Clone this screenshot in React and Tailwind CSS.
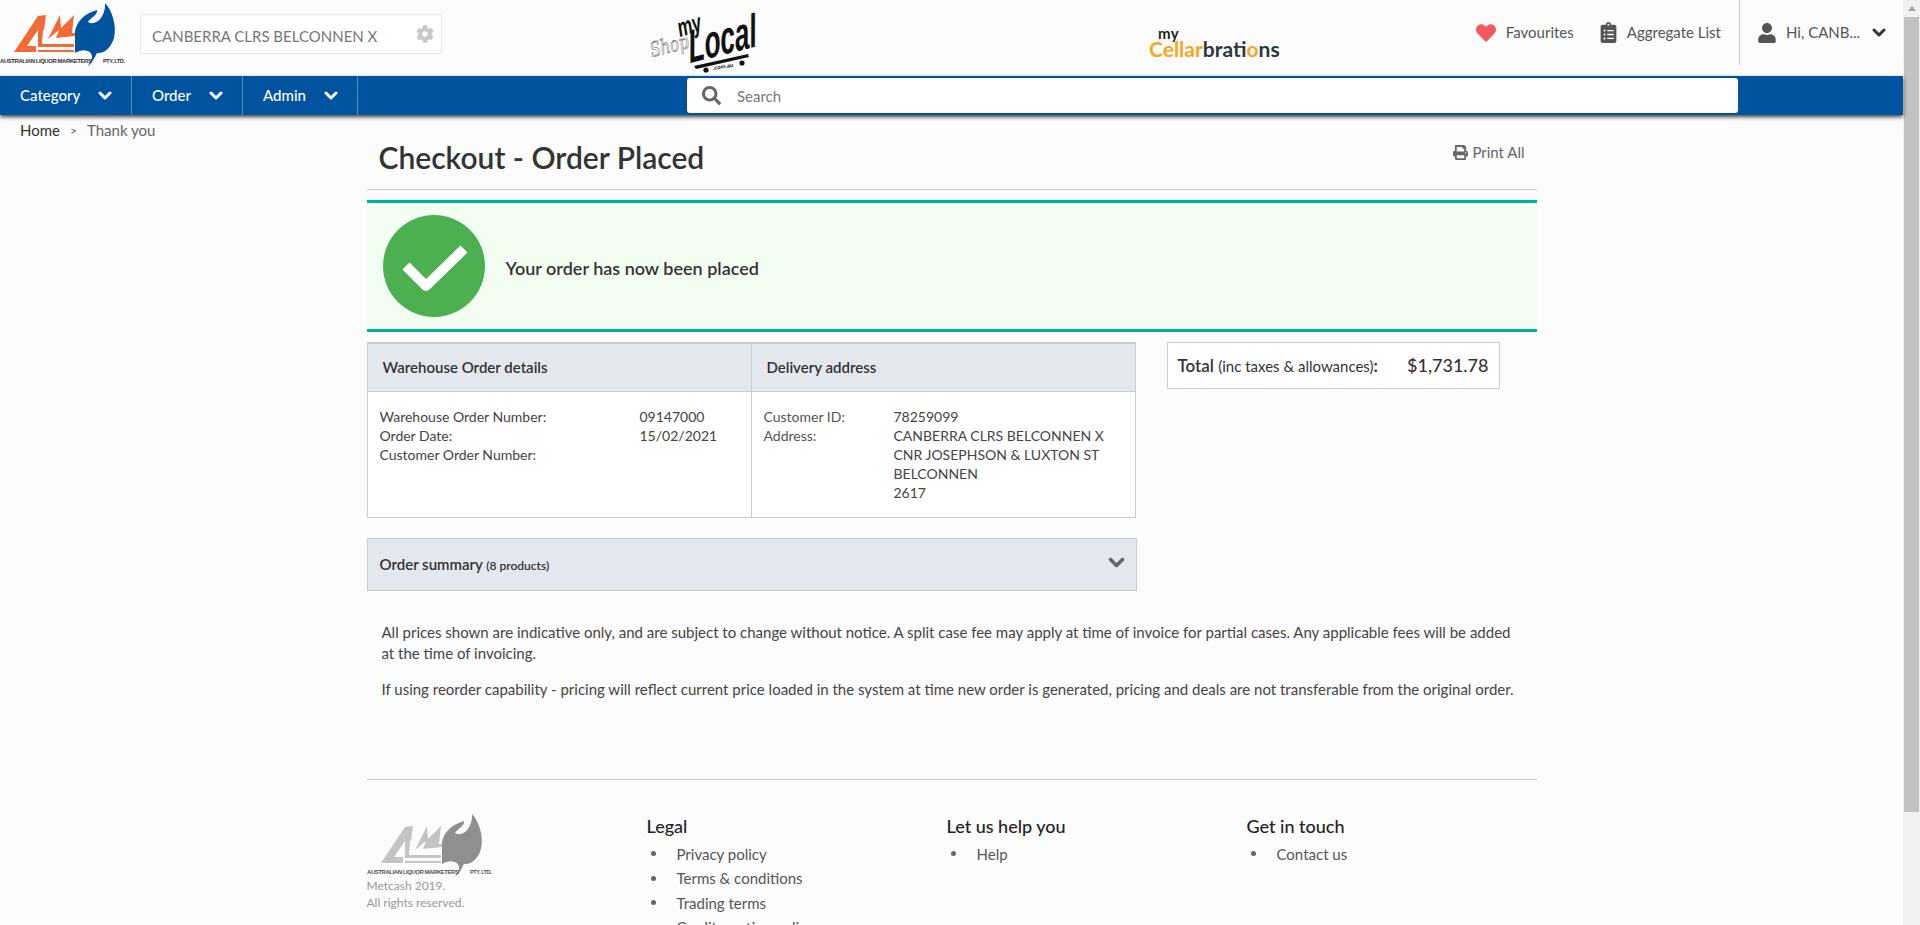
import React from "react";
import { FaHeart, FaClipboardList, FaUser, FaSearch, FaCog, FaPrint } from "react-icons/fa";

function Chevron({ className }) {
  return (
    <svg viewBox="0 0 14 10" className={className}>
      <path d="M2 2 L7 7 L12 2" fill="none" stroke="currentColor" strokeWidth="3" strokeLinecap="round" strokeLinejoin="round" />
    </svg>
  );
}

function AlmLogo({ gray, className }) {
  const o = gray ? "#c4c4c4" : "#f26a36";
  const b = gray ? "#8f8f8f" : "#00539f";
  const t = gray ? "#555" : "#333";
  return (
    <svg viewBox="0 0 130 72" className={className}>
      <path fill={b} d="M75 31 C77 22 83 14 97 10 C98 15 90 18 88 22 C96 27 106 16 105 3 C112 10 117 26 114 38 C111 48 104 54 97 53 C95 57 92 63 88 66 L92 58 C93 52 85 47 75 53 Z" />
      <path fill={o} d="M14 52 L38 16 L46 15 L44 30 L38 30 L27 46 L36 46 L36 52 Z" />
      <path fill={o} d="M38 30 L43 30 L42 44 L74 44 L74 47 L38 47 Z" />
      <path fill={o} d="M38 50 L74 50 L74 52 L38 52 Z" />
      <path fill={o} d="M48 39 L60 15 L61 28 L74 15 L72 33 L75 33 L75 36 L56 38 L59 30 Z" />
      <text x="0" y="63" fontFamily="'Liberation Sans', sans-serif" fontWeight="700" fontSize="6" fill={t} textLength="92">AUSTRALIAN LIQUOR MARKETERS</text>
      <text x="103" y="63" fontFamily="'Liberation Sans', sans-serif" fontWeight="700" fontSize="5.5" fill={t} textLength="22">PTY. LTD.</text>
    </svg>
  );
}

function ShopLocal() {
  return (
    <svg viewBox="640 10 130 66" className="w-[130px] h-[66px] overflow-visible">
      <text x="652" y="57" fontFamily="'DejaVu Serif', serif" fontStyle="italic" fontSize="20" fill="#fff" stroke="#666" strokeWidth="0.6" textLength="39" lengthAdjust="spacingAndGlyphs" transform="rotate(-14 652 57)">Shop</text>
      <text x="680" y="37" fontFamily="'Liberation Sans', sans-serif" fontWeight="700" fontStyle="italic" fontSize="26" fill="#111" textLength="24" lengthAdjust="spacingAndGlyphs" transform="rotate(-16 680 37)">my</text>
      <text x="0" y="0" fontFamily="'Liberation Sans', sans-serif" fontWeight="700" fontStyle="italic" fontSize="46" fill="#111" textLength="70" lengthAdjust="spacingAndGlyphs" transform="translate(690 63) rotate(-14) skewX(-8)">Local</text>
      <path d="M694 66 L748 54 L749 57 L696 69 Z" fill="#111" />
      <circle cx="706" cy="70" r="2.6" fill="#111" />
      <circle cx="742" cy="63" r="2.6" fill="#111" />
      <text x="713" y="70" fontFamily="'Liberation Sans', sans-serif" fontStyle="italic" fontWeight="700" fontSize="5.5" fill="#111" transform="rotate(-9 713 70)">.com.au</text>
    </svg>
  );
}

function Cellar() {
  return (
    <div className="flex flex-col items-start font-bold leading-none whitespace-nowrap">
      <span className="ml-[9px] text-[15px] text-[#222] leading-[13px] tracking-[0.5px]">my</span>
      <span className="text-[21px] leading-[17px] text-[#2f3640]">
        <span className="text-[#f6a623]">Cellar</span>brati<span className="text-[#f6a623]">o</span>ns
      </span>
    </div>
  );
}

function NavItem({ label, w }) {
  return (
    <div className={`flex items-center h-full border-r border-[#5a8cc0] pl-5 ${w}`}>
      <span className="text-[15px] text-white font-medium">{label}</span>
      <Chevron className="text-white w-[14px] h-[10px] ml-auto mr-[19px]" />
    </div>
  );
}

function FooterCol({ title, items, w }) {
  return (
    <div className={w}>
      <h4 className="text-[18px] leading-[24px] font-medium text-[#222]">{title}</h4>
      <ul className="mt-[4px] text-[15px] leading-[24.5px] text-[#555]">
        {items.map((i) => (
          <li key={i} className="flex items-center whitespace-nowrap">
            <span className="ml-[4px] w-[5px] h-[5px] rounded-full bg-[#666] shrink-0" />
            <span className="ml-[21px]">{i}</span>
          </li>
        ))}
      </ul>
    </div>
  );
}

export default function App() {
  return (
    <div className="h-[925px] w-[1920px] overflow-hidden flex bg-[#fcfcfc] font-['Lato','Liberation_Sans',sans-serif] text-[#333]">
      <div className="w-[1903px] shrink-0 flex flex-col">
        <header className="h-[76px] flex items-start shrink-0">
          <AlmLogo className="w-[130px] h-[72px] shrink-0" />
          <div className="ml-[10px] mt-[14px] w-[302px] h-[40px] bg-white border border-[#e6e6e6] rounded-[2px] flex items-center pl-[11px] pr-[7px]">
            <span className="text-[15px] text-[#777] flex-1 whitespace-nowrap pt-[4px]">CANBERRA CLRS BELCONNEN X</span>
            <FaCog className="w-[18px] h-[18px] text-[#c8c8c8]" />
          </div>
          <div className="ml-[198px] mt-[10px] w-[130px] shrink-0"><ShopLocal /></div>
          <div className="ml-[379px] mt-[27px] shrink-0"><Cellar /></div>
          <div className="ml-auto flex items-center h-[65px]">
            <FaHeart className="w-[20px] h-[20px] text-[#f05a5f]" />
            <span className="ml-[10px] text-[15px] text-[#555]">Favourites</span>
            <FaClipboardList className="ml-[26px] w-[17px] h-[21px] text-[#555]" />
            <span className="ml-[10px] text-[15px] text-[#555]">Aggregate List</span>
            <div className="ml-[18px] h-[65px] border-l border-[#ccc] flex items-center pl-[18px] w-[164px] pr-[17px]">
              <FaUser className="w-[18px] h-[20px] text-[#555]" />
              <span className="ml-[10px] text-[15px] text-[#555]">Hi, CANB...</span>
              <Chevron className="ml-auto w-[14px] h-[10px] text-[#333]" />
            </div>
          </div>
        </header>
        <nav className="h-[39px] bg-[#00539f] shadow-[0_2px_4px_rgba(0,0,0,0.75)] flex items-center shrink-0 relative">
          <NavItem label="Category" w="w-[132px]" />
          <NavItem label="Order" w="w-[111px]" />
          <NavItem label="Admin" w="w-[115px]" />
          <div className="ml-[329px] w-[1051px] h-[35px] bg-white rounded-[3px] flex items-center pl-[15px]">
            <FaSearch className="w-[19px] h-[19px] text-[#666]" />
            <span className="ml-[16px] pt-[1px] text-[15px] text-[#777]">Search</span>
          </div>
        </nav>
        <div className="h-[30px] pl-[20px] pt-[1px] flex items-center text-[15px] shrink-0">
          <span className="text-[#333]">Home</span>
          <span className="mx-[10px] text-[#666] text-[12px]">&gt;</span>
          <span className="text-[#666]">Thank you</span>
        </div>
        <main className="w-[1170px] mx-auto">
          <div className="h-[44px] border-b border-[#ccc] flex items-start justify-between box-content">
            <h1 className="pl-[12px] text-[30px] leading-[40px] font-semibold text-[#333] mt-[-8px]">Checkout - Order Placed</h1>
            <div className="flex items-center mr-[12px] mt-[-3px] h-[20px] text-[15px] text-[#666]">
              <FaPrint className="w-[15px] h-[15px] mr-[4px]" />Print All
            </div>
          </div>
          <div className="mt-[10px] h-[132px] border-y-[3px] border-[#00b294] bg-[#f3fef3] flex items-center pl-[16px]">
            <div className="w-[102px] h-[102px] rounded-full bg-[#4caf50] flex items-center justify-center">
              <svg viewBox="-40 -30 80 60" className="w-[80px] h-[60px]">
                <path d="M-28 0 L-8 20 L30 -17" fill="none" stroke="#fff" strokeWidth="10" strokeLinejoin="round" />
              </svg>
            </div>
            <span className="ml-[21px] mt-[4px] text-[18px] font-semibold text-[#333]">Your order has now been placed</span>
          </div>
          <div className="flex mt-[10px] items-start">
            <div className="w-[769px] shrink-0">
              <div className="border border-[#ccc] border-t-2 flex flex-col h-[176px]">
                <div className="flex h-[48px] bg-[#e3e8ef] border-b border-[#ccc] shrink-0">
                  <div className="w-[384px] border-r border-[#ccc] pl-[15px] flex items-center text-[15px] font-semibold text-[#333]">Warehouse Order details</div>
                  <div className="flex-1 pl-[15px] flex items-center text-[15px] font-semibold text-[#333]">Delivery address</div>
                </div>
                <div className="flex flex-1 bg-white text-[14px] leading-[19px] text-[#444]">
                  <div className="w-[384px] border-r border-[#ccc] pl-[12px] pt-[15px] flex">
                    <div className="w-[260px]">
                      <div>Warehouse Order Number:</div>
                      <div>Order Date:</div>
                      <div>Customer Order Number:</div>
                    </div>
                    <div>
                      <div>09147000</div>
                      <div>15/02/2021</div>
                    </div>
                  </div>
                  <div className="flex-1 pl-[12px] pt-[15px] flex">
                    <div className="w-[130px] text-[#555]">
                      <div>Customer ID:</div>
                      <div>Address:</div>
                    </div>
                    <div>
                      <div>78259099</div>
                      <div>CANBERRA CLRS BELCONNEN X</div>
                      <div>CNR JOSEPHSON &amp; LUXTON ST</div>
                      <div>BELCONNEN</div>
                      <div>2617</div>
                    </div>
                  </div>
                </div>
              </div>
              <div className="mt-[20px] w-[770px] h-[53px] bg-[#e3e8ef] border border-[#ccc] flex items-center pl-[12px] pr-[11px]">
                <span className="text-[15px] font-semibold text-[#333]">Order summary <span className="text-[12px]">(8 products)</span></span>
                <Chevron className="ml-auto w-[17px] h-[12px] text-[#666] mt-[-4px]" />
              </div>
            </div>
            <div className="ml-[31px] w-[333px] h-[47px] bg-white border border-[#ccc] flex items-center pl-[10px] pr-[10px]">
              <span className="text-[17px] font-semibold text-[#333] whitespace-nowrap">Total <span className="text-[15px] font-normal">(inc taxes &amp; allowances)</span><span className="font-bold">:</span></span>
              <span className="ml-auto text-[18px] font-medium text-[#333]">$1,731.78</span>
            </div>
          </div>
          <div className="mt-[31px] px-[15px] text-[15px] leading-[20.5px] text-[#444]">
            <p>All prices shown are indicative only, and are subject to change without notice. A split case fee may apply at time of invoice for partial cases. Any applicable fees will be added at the time of invoicing.</p>
            <p className="mt-[16px]">If using reorder capability - pricing will reflect current price loaded in the system at time new order is generated, pricing and deals are not transferable from the original order.</p>
          </div>
          <div className="mt-[79px] border-t border-[#ccc] pt-[31px] flex">
            <div className="w-[280px] shrink-0">
              <AlmLogo gray className="w-[130px] h-[72px]" />
              <div className="-mt-[6px] text-[12px] leading-[17px] text-[#999]">Metcash 2019.<br />All rights reserved.</div>
            </div>
            <FooterCol w="w-[300px] mt-[3px]" title="Legal" items={["Privacy policy", "Terms & conditions", "Trading terms", "Credit quoting policy"]} />
            <FooterCol w="w-[300px] mt-[3px]" title="Let us help you" items={["Help"]} />
            <FooterCol w="w-[290px] mt-[3px]" title="Get in touch" items={["Contact us"]} />
          </div>
        </main>
      </div>
      <div className="w-[17px] shrink-0 bg-[#f1f1f1] flex flex-col items-center">
        <div className="h-[17px] flex items-center justify-center">
          <div className="w-0 h-0 border-x-[4px] border-x-transparent border-b-[5px] border-b-[#a3a3a3]" />
        </div>
        <div className="w-[15px] h-[795px] bg-[#c1c1c1]" />
      </div>
    </div>
  );
}
